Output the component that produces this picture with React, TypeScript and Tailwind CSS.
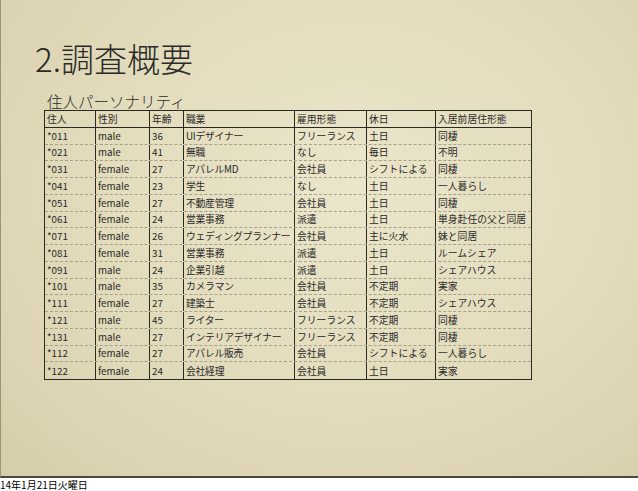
import React from "react";

const rows: string[][] = [
  ["*011", "male", "36", "UIデザイナー", "フリーランス", "土日", "同棲"],
  ["*021", "male", "41", "無職", "なし", "毎日", "不明"],
  ["*031", "female", "27", "アパレルMD", "会社員", "シフトによる", "同棲"],
  ["*041", "female", "23", "学生", "なし", "土日", "一人暮らし"],
  ["*051", "female", "27", "不動産管理", "会社員", "土日", "同棲"],
  ["*061", "female", "24", "営業事務", "派遣", "土日", "単身赴任の父と同居"],
  ["*071", "female", "26", "ウェディングプランナー", "会社員", "主に火水", "妹と同居"],
  ["*081", "female", "31", "営業事務", "派遣", "土日", "ルームシェア"],
  ["*091", "male", "24", "企業引越", "派遣", "土日", "シェアハウス"],
  ["*101", "male", "35", "カメラマン", "会社員", "不定期", "実家"],
  ["*111", "female", "27", "建築士", "会社員", "不定期", "シェアハウス"],
  ["*121", "male", "45", "ライター", "フリーランス", "不定期", "同棲"],
  ["*131", "male", "27", "インテリアデザイナー", "フリーランス", "不定期", "同棲"],
  ["*112", "female", "27", "アパレル販売", "会社員", "シフトによる", "一人暮らし"],
  ["*122", "female", "24", "会社経理", "会社員", "土日", "実家"],
];

const header = ["住人", "性別", "年齢", "職業", "雇用形態", "休日", "入居前居住形態"];
const widths = [
  "w-[50px]",
  "w-[54px]",
  "w-[34px]",
  "w-[111px] tracking-[-0.25px]",
  "w-[72px]",
  "w-[69px]",
  "w-[96px]",
];

function Row({ cells, last, head }: { cells: string[]; last?: boolean; head?: boolean }) {
  const border = head
    ? "border-b border-solid border-[#2a2a22]"
    : last
    ? ""
    : "border-b border-dashed border-[#a7a18c]";
  return (
    <div className={`flex h-[16.75px] ${border}`}>
      {cells.map((c, i) => (
        <div
          key={i}
          className={`${widths[i]} shrink-0 h-full flex items-center pl-[2px] whitespace-nowrap overflow-visible ${
            i > 0 ? "border-l border-[#2a2a22]" : ""
          }`}
        >
          {c}
        </div>
      ))}
    </div>
  );
}

export default function App() {
  return (
    <div
      className="w-[638px] h-[491px] bg-white text-[#222] overflow-hidden"
      style={{ fontFamily: '"Noto Sans CJK JP", "Noto Sans", sans-serif' }}
    >
      <div className="h-[478px] border-b-2 border-l border-b-[#4a4838] border-l-[#9a9478] bg-[radial-gradient(ellipse_at_55%_40%,#ebe5cb_0%,#e2dbbb_55%,#d6cdaa_100%)] flex flex-col">
        <div className="pl-[34px] pt-[40px] text-[33px] leading-[36px] font-light text-[#2a2a2a]">
          2.調査概要
        </div>
        <div className="pl-[46px] mt-[17px] text-[15.5px] leading-[16px] font-light text-[#2a2a2a]">
          住人パーソナリティ
        </div>
        <div className="ml-[43px] mt-[1px] w-[488px] border border-[#2a2a22] text-[9.8px] leading-[12px] text-[#2a2a2a]">
          <Row cells={header} head />
          {rows.map((r, i) => (
            <Row key={i} cells={r} last={i === rows.length - 1} />
          ))}
        </div>
      </div>
      <div className="text-[10px] leading-[11px] pt-[1px] text-black">14年1月21日火曜日</div>
    </div>
  );
}
